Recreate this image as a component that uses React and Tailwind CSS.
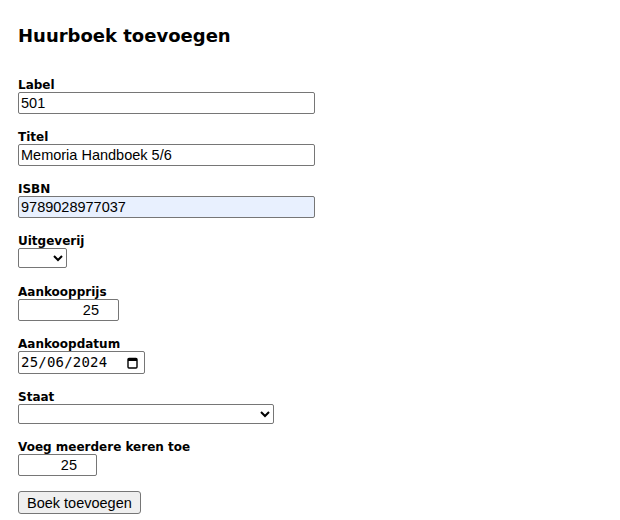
import { useState } from "react";

const labelCls =
  "block text-[12px] leading-[14px] font-bold text-black font-['DejaVu_Sans',sans-serif]";
const inputCls =
  "block h-[22px] border border-[#767676] rounded-[2px] px-[2px] py-0 text-[14.5px] leading-[20px] text-black font-['Liberation_Sans',Arial,sans-serif] outline-none";
const selectCls =
  "block h-[20px] border border-[#767676] rounded-[2px] bg-white text-[14.5px] font-['Liberation_Sans',Arial,sans-serif]";

const Field = ({ label, children, className = "mb-[16px]" }) => (
  <div className={className}>
    <label className={labelCls}>{label}</label>
    {children}
  </div>
);

const CalendarIcon = () => (
  <svg width="11" height="12" viewBox="0 0 11 12" fill="none">
    <rect x="1" y="1.5" width="9" height="9.5" rx="1" stroke="#000" strokeWidth="1.4" />
    <rect x="1" y="1.5" width="9" height="2.5" fill="#000" />
  </svg>
);

const App = () => {
  const [label, setLabel] = useState("501");
  const [title, setTitle] = useState("Memoria Handboek 5/6");
  const [isbn, setIsbn] = useState("9789028977037");
  const [price, setPrice] = useState("25");
  const [count, setCount] = useState("25");

  return (
    <div className="px-[18px] pt-[22px] bg-white min-h-screen text-black">
      <h2 className="text-[18px] leading-[27px] font-bold font-['DejaVu_Sans',sans-serif] mb-[29px]">
        Huurboek toevoegen
      </h2>

      <form onSubmit={(e) => e.preventDefault()}>
        <Field label="Label">
          <input
            type="text"
            className={`${inputCls} w-[297px]`}
            value={label}
            onChange={(e) => setLabel(e.target.value)}
          />
        </Field>

        <Field label="Titel">
          <input
            type="text"
            className={`${inputCls} w-[297px]`}
            value={title}
            onChange={(e) => setTitle(e.target.value)}
          />
        </Field>

        <Field label="ISBN">
          <input
            type="text"
            className={`${inputCls} w-[297px] bg-[#e8f0fe]`}
            value={isbn}
            onChange={(e) => setIsbn(e.target.value)}
          />
        </Field>

        <Field label="Uitgeverij" className="mb-[17px]">
          <select className={`${selectCls} w-[49px]`} defaultValue="">
            <option value=""></option>
          </select>
        </Field>

        <Field label="Aankoopprijs">
          <input
            type="text"
            className={`${inputCls} w-[101px] text-right pr-[19px]`}
            value={price}
            onChange={(e) => setPrice(e.target.value)}
          />
        </Field>

        <Field label="Aankoopdatum">
          <div className="flex items-center justify-between w-[127px] h-[23px] border border-[#767676] rounded-[2px] pl-[2px] pr-[6px]">
            <span className="text-[14px] font-['DejaVu_Sans_Mono',monospace] tracking-[0.2px]">
              25/06/2024
            </span>
            <CalendarIcon />
          </div>
        </Field>

        <Field label="Staat">
          <select className={`${selectCls} w-[256px]`} defaultValue="">
            <option value=""></option>
          </select>
        </Field>

        <Field label="Voeg meerdere keren toe" className="mb-[15px]">
          <input
            type="text"
            className={`${inputCls} w-[79px] text-right pr-[19px]`}
            value={count}
            onChange={(e) => setCount(e.target.value)}
          />
        </Field>

        <button
          type="submit"
          className="block h-[23px] px-[8px] border border-[#767676] rounded-[3px] bg-[#efefef] text-[14.5px] leading-[20px] font-['Liberation_Sans',Arial,sans-serif]"
        >
          Boek toevoegen
        </button>
      </form>
    </div>
  );
};

export default App;
